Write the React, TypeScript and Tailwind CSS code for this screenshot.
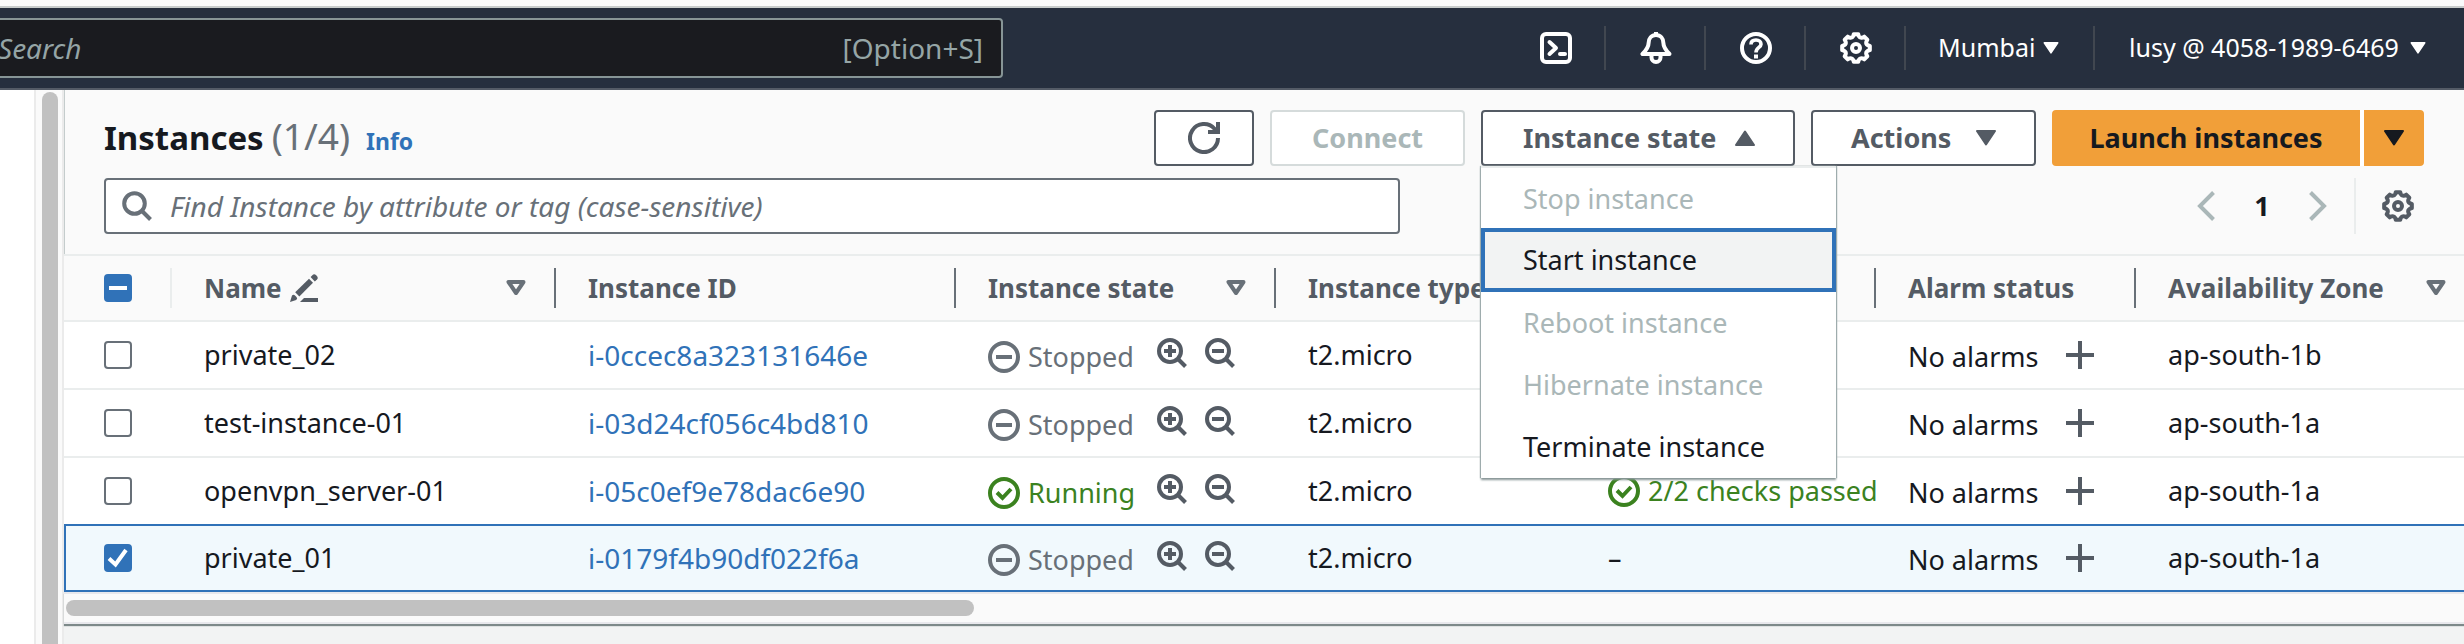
import { useState } from "react";
import type { ReactNode } from "react";

type IconProps = { className?: string };

function gearPath(): string {
  const teeth = 8;
  const pts: string[] = [];
  for (let i = 0; i < teeth; i++) {
    const at = (deg: number, r: number) => {
      const a = ((i * 45 + deg - 90) * Math.PI) / 180;
      return `${(16 + r * Math.cos(a)).toFixed(2)} ${(16 + r * Math.sin(a)).toFixed(2)}`;
    };
    pts.push(`${i === 0 ? "M" : "L"}${at(-9, 14)}`, `L${at(9, 14)}`, `L${at(13, 12.2)}`, `Q${at(22.5, 10.4)} ${at(32, 12.2)}`);
  }
  return pts.join("") + "Z";
}

const GEAR = gearPath();

function GearIcon({ className }: IconProps) {
  return (
    <svg viewBox="0 0 32 32" className={className} fill="none" stroke="currentColor" strokeWidth="4" strokeLinejoin="round" aria-hidden="true">
      <path d={GEAR} />
      <circle cx="16" cy="16" r="4" />
    </svg>
  );
}

function TerminalIcon({ className }: IconProps) {
  return (
    <svg viewBox="0 0 32 32" className={className} fill="none" stroke="currentColor" strokeWidth="4" aria-hidden="true">
      <rect x="2" y="2" width="28" height="28" rx="4" />
      <path d="M9.5 10l6.5 6-6.5 6M20 22h5" strokeLinecap="round" strokeLinejoin="round" />
    </svg>
  );
}

function BellIcon({ className }: IconProps) {
  return (
    <svg viewBox="0 0 32 32" className={className} fill="none" stroke="currentColor" strokeWidth="4" strokeLinejoin="round" aria-hidden="true">
      <path d="M16 3C11.5 3 8.600 6.500 8.600 11C8.600 15.500 6 18.500 2.500 22H29.500C26 18.500 23.400 15.500 23.400 11C23.400 6.500 20.500 3 16 3Z" />
      <path d="M16 0v3" />
      <path d="M11.500 23v2.500a4.500 4.500 0 0 0 9 0V23" />
    </svg>
  );
}

function HelpIcon({ className }: IconProps) {
  return (
    <svg viewBox="0 0 32 32" className={className} fill="none" stroke="currentColor" strokeWidth="4" aria-hidden="true">
      <circle cx="16" cy="16" r="14" />
      <path d="M11 12.500C11 9.500 13 8 16 8s5 1.600 5 4.200c0 3.300-5 3.300-5 8.300" strokeWidth="3.600" />
      <path d="M16 22.500v4" />
    </svg>
  );
}

function SearchIcon({ className }: IconProps) {
  return (
    <svg viewBox="0 0 30 30" className={className} fill="none" stroke="currentColor" strokeWidth="4" aria-hidden="true">
      <circle cx="12.500" cy="12.500" r="10.300" />
      <path d="M19.500 19.500l9 9" />
    </svg>
  );
}

function ZoomIcon({ className, plus }: IconProps & { plus?: boolean }) {
  return (
    <svg viewBox="0 0 30 30" className={className} fill="none" stroke="currentColor" strokeWidth="4" aria-hidden="true">
      <circle cx="13" cy="13" r="11" />
      <path d="M20.500 20.500l8 8" />
      <path d="M7 13h12" />
      {plus && <path d="M13 7v12" />}
    </svg>
  );
}

function RefreshIcon({ className }: IconProps) {
  return (
    <svg viewBox="0 0 32 32" className={className} fill="none" stroke="currentColor" strokeWidth="4" aria-hidden="true">
      <path d="M30 16A14 14 0 1 1 26.500 6.800L29 10" />
      <path d="M30 0V10H20" />
    </svg>
  );
}

function StoppedIcon({ className }: IconProps) {
  return (
    <svg viewBox="0 0 32 32" className={className} fill="none" stroke="currentColor" strokeWidth="4" aria-hidden="true">
      <circle cx="16" cy="16" r="14" />
      <path d="M8 16h16" />
    </svg>
  );
}

function OkIcon({ className }: IconProps) {
  return (
    <svg viewBox="0 0 32 32" className={className} fill="none" stroke="currentColor" strokeWidth="4" aria-hidden="true">
      <circle cx="16" cy="16" r="14" />
      <path d="M9 15.500l5.500 5.500 8.500-9" />
    </svg>
  );
}

function PencilIcon({ className }: IconProps) {
  return (
    <svg viewBox="0 0 28 28" className={className} fill="currentColor" aria-hidden="true">
      <path d="M0 28L2 21.500Q3.500 19.800 5 21.500L6.500 23Q8 24.500 6.200 26Z" />
      <path d="M5.200 18.300L19 4.800L23 8.800L9.300 22.500Z" />
      <path d="M20.600 3L22.600 1Q24.200 -0.600 26.400 1.500Q28.800 3.800 27 5.500L24.800 7.400Z" />
      <path d="M14 24H28V28H10Z" />
    </svg>
  );
}

function PlusIcon({ className }: IconProps) {
  return (
    <svg viewBox="0 0 28 28" className={className} fill="none" stroke="currentColor" strokeWidth="4" aria-hidden="true">
      <path d="M14 0v28M0 14h28" />
    </svg>
  );
}

function Caret({ className, up }: IconProps & { up?: boolean }) {
  return (
    <svg viewBox="0 0 20 16" className={className} fill="currentColor" stroke="currentColor" strokeWidth="2" strokeLinejoin="round" aria-hidden="true">
      <path d={up ? "M10 1.500L19 15H1Z" : "M1 1H19L10 14.500Z"} />
    </svg>
  );
}

function SortIcon({ className }: IconProps) {
  return (
    <svg viewBox="0 0 20 16" className={className} fill="none" stroke="currentColor" strokeWidth="4" strokeLinejoin="round" aria-hidden="true">
      <path d="M2.500 2H17.500L10 13Z" />
    </svg>
  );
}

function Chevron({ className, right }: IconProps & { right?: boolean }) {
  return (
    <svg viewBox="0 0 18 30" className={className} fill="none" stroke="currentColor" strokeWidth="4" aria-hidden="true">
      <path d={right ? "M1.500 1.500L15 15L1.500 28.500" : "M16.500 1.500L3 15L16.500 28.500"} />
    </svg>
  );
}

function Checkbox({ label, checked, mixed, onChange }: { label: string; checked: boolean; mixed?: boolean; onChange: () => void }) {
  return (
    <span className="grid size-7">
      <input
        type="checkbox"
        aria-label={label}
        checked={checked}
        onChange={onChange}
        className="col-start-1 row-start-1 size-7 appearance-none rounded-[4px] border-2 border-[#687078] bg-white checked:border-[#3072b8] checked:bg-[#3072b8]"
      />
      {checked && (
        <svg viewBox="0 0 28 28" className="pointer-events-none col-start-1 row-start-1 size-7" fill="none" stroke="white" strokeWidth="4" aria-hidden="true">
          <path d={mixed ? "M5 14h18" : "M5 14.500l6.500 6L22 6"} />
        </svg>
      )}
    </span>
  );
}

function NavSeparator() {
  return <span className="h-11 w-0.5 shrink-0 bg-[#414750]" />;
}

function NavIconButton({ label, children }: { label: string; children: ReactNode }) {
  return (
    <>
      <button type="button" aria-label={label} className="flex h-full w-[98px] shrink-0 items-center justify-center pl-0.5">
        {children}
      </button>
      <NavSeparator />
    </>
  );
}

function TopBar() {
  return (
    <header className="flex h-[84px] shrink-0 items-center justify-between border-t-2 border-b-2 border-t-[#c8cccc] border-b-[#545b66] bg-[#262f3e] text-[25px] text-white">
      <div className="-ml-5 flex h-[60px] w-[1023px] items-center rounded-[4px] border-2 border-[#879596] bg-[#1a1b1f] pr-[18px] pl-[16px] text-[28px] text-[#95a5a6]">
        <input type="search" aria-label="Search services" placeholder="Search" className="min-w-0 flex-1 bg-transparent outline-none placeholder:text-[#95a5a6] placeholder:italic" />
        <span>[Option+S]</span>
      </div>
      <nav className="flex h-full items-center">
        <NavIconButton label="CloudShell"><TerminalIcon className="size-8" /></NavIconButton>
        <NavIconButton label="Notifications"><BellIcon className="size-8" /></NavIconButton>
        <NavIconButton label="Help"><HelpIcon className="size-8" /></NavIconButton>
        <NavIconButton label="Settings"><GearIcon className="size-8" /></NavIconButton>
        <button type="button" className="flex h-full w-[187px] items-center justify-between pr-[34px] pl-8">
          Mumbai
          <Caret className="h-3 w-4 shrink-0" />
        </button>
        <NavSeparator />
        <button type="button" className="flex h-full w-[369px] items-center justify-between pr-[38px] pl-[34px]">
          lusy @ 4058-1989-6469
          <Caret className="h-3 w-4 shrink-0" />
        </button>
      </nav>
    </header>
  );
}

const MENU = [
  { label: "Stop instance", enabled: false },
  { label: "Start instance", enabled: true, focused: true },
  { label: "Reboot instance", enabled: false },
  { label: "Hibernate instance", enabled: false },
  { label: "Terminate instance", enabled: true },
];

function StateMenu() {
  return (
    <ul role="menu" className="absolute top-full left-0 z-10 w-[355px] border-t-2 border-[#eaeded] bg-white font-normal text-[#16191f] shadow-[0_2px_2px_0_#879596,1px_0_1px_0_#aab7b8,-1px_0_1px_0_#aab7b8]">
      {MENU.map((item) => (
        <li key={item.label} role="none">
          <button
            type="button"
            role="menuitem"
            disabled={!item.enabled}
            className={
              item.focused
                ? "-mt-0.5 flex h-16 w-full items-center border-4 border-[#3072b8] bg-[#f2f3f3] px-[38px] text-left"
                : "flex h-[62px] w-full items-center px-[42px] text-left disabled:text-[#aab7b8]"
            }
          >
            {item.label}
          </button>
        </li>
      ))}
    </ul>
  );
}

function Toolbar() {
  return (
    <div className="flex flex-col gap-3 border-l border-[#c4cccc] bg-[#fafafa] pt-5 pr-10 pb-5 pl-[39px]">
      <div className="flex h-14 items-center justify-between">
        <h1 className="flex items-baseline pb-1 text-[33px] font-bold text-[#16191f]">
          Instances
          <span className="ml-2 text-[37px] font-normal text-[#687078]">(1/4)</span>
          <a href="#info" className="ml-4 text-[23px] font-bold text-[#3072b8]">Info</a>
        </h1>
        <div className="flex gap-4 text-[27px] font-bold text-[#545b64]">
          <button type="button" aria-label="Refresh" className="flex h-14 w-[100px] items-center justify-center rounded-[4px] border-2 border-[#545b64] bg-white">
            <RefreshIcon className="size-8" />
          </button>
          <button type="button" disabled className="h-14 w-[195px] rounded-[4px] border-2 border-[#d5dbdb] bg-white text-[#aab7b8]">
            Connect
          </button>
          <div className="relative">
            <button type="button" aria-expanded="true" className="flex h-14 w-[314px] items-center justify-between rounded-[4px] border-2 border-[#545b64] bg-white pr-[38px] pl-10">
              Instance state
              <Caret up className="h-4 w-5" />
            </button>
            <StateMenu />
          </div>
          <button type="button" className="flex h-14 w-[225px] items-center justify-between rounded-[4px] border-2 border-[#545b64] bg-white pr-[38px] pl-[38px]">
            Actions
            <Caret className="h-4 w-5" />
          </button>
          <div className="flex gap-1 bg-white text-[#16191f]">
            <button type="button" className="h-14 w-[308px] rounded-l-[4px] bg-[#f19f39]">Launch instances</button>
            <button type="button" aria-label="More launch options" className="flex h-14 w-15 items-center justify-center rounded-r-[4px] bg-[#f19f39]">
              <Caret className="h-4 w-5" />
            </button>
          </div>
        </div>
      </div>
      <div className="flex items-center justify-between">
        <label className="flex h-14 w-[1296px] items-center rounded-[4px] border-2 border-[#687078] bg-white pl-4 text-[#687078]">
          <SearchIcon className="size-[30px] shrink-0" />
          <input
            type="search"
            aria-label="Find Instance by attribute or tag (case-sensitive)"
            placeholder="Find Instance by attribute or tag (case-sensitive)"
            className="ml-[18px] min-w-0 flex-1 bg-transparent text-[28px] outline-none placeholder:text-[#687078] placeholder:italic"
          />
        </label>
        <div className="flex items-center">
          <button type="button" aria-label="Previous page" className="text-[#aab7b8]"><Chevron className="h-[30px] w-[18px]" /></button>
          <span className="w-[94px] text-center text-[27px] font-bold text-[#16191f]">1</span>
          <button type="button" aria-label="Next page" className="text-[#aab7b8]"><Chevron right className="h-[30px] w-[18px]" /></button>
          <span className="mr-[26px] ml-[27px] h-14 w-0.5 bg-[#eaeded]" />
          <button type="button" aria-label="Preferences" className="mr-[10px] text-[#545b64]"><GearIcon className="size-8" /></button>
        </div>
      </div>
    </div>
  );
}

type Instance = { name: string; id: string; type: string; running: boolean; check: string; zone: string };

const INSTANCES: Instance[] = [
  { name: "private_02", id: "i-0ccec8a323131646e", type: "t2.micro", running: false, check: "", zone: "ap-south-1b" },
  { name: "test-instance-01", id: "i-03d24cf056c4bd810", type: "t2.micro", running: false, check: "", zone: "ap-south-1a" },
  { name: "openvpn_server-01", id: "i-05c0ef9e78dac6e90", type: "t2.micro", running: true, check: "2/2 checks passed", zone: "ap-south-1a" },
  { name: "private_01", id: "i-0179f4b90df022f6a", type: "t2.micro", running: false, check: "–", zone: "ap-south-1a" },
];

function HeadCell({ children, sortable, last }: { children?: ReactNode; sortable?: boolean; last?: boolean }) {
  return (
    <th scope="col" className="h-[66px] border-b-2 border-[#eaeded] p-0 text-left font-bold">
      <div className={last ? "flex h-10 items-center justify-between pr-[18px] pl-8" : "flex h-10 items-center justify-between border-r-2 border-[#687078] pr-7 pl-8"}>
        <span className="flex items-center gap-2 whitespace-nowrap">{children}</span>
        {sortable && <SortIcon className="h-4 w-5 shrink-0 text-[#687078]" />}
      </div>
    </th>
  );
}

function InstanceTable() {
  const [selected, setSelected] = useState<string[]>(["private_01"]);
  const toggle = (name: string) =>
    setSelected((cur) => (cur.includes(name) ? cur.filter((n) => n !== name) : [...cur, name]));

  return (
    <table className="w-full table-fixed border-separate border-spacing-0 border-t-2 border-[#eaeded] text-[27px] text-[#16191f]">
      <colgroup>
        <col className="w-[108px]" />
        <col className="w-[384px]" />
        <col className="w-[400px]" />
        <col className="w-[320px]" />
        <col className="w-[300px]" />
        <col className="w-[300px]" />
        <col className="w-[260px]" />
        <col />
      </colgroup>
      <thead className="bg-[#fafafa] text-[26px] text-[#545b64]">
        <tr>
          <th scope="col" className="h-[66px] border-b-2 border-[#eaeded] p-0">
            <div className="flex h-10 items-center border-r-2 border-[#eaeded] pl-10">
              <Checkbox label="Select all instances" checked={selected.length > 0} mixed={selected.length < INSTANCES.length} onChange={() => setSelected([])} />
            </div>
          </th>
          <HeadCell sortable>
            Name
            <PencilIcon className="size-7" />
          </HeadCell>
          <HeadCell>Instance ID</HeadCell>
          <HeadCell sortable>Instance state</HeadCell>
          <HeadCell>Instance type</HeadCell>
          <HeadCell />
          <HeadCell>Alarm status</HeadCell>
          <HeadCell sortable last>Availability Zone</HeadCell>
        </tr>
      </thead>
      <tbody>
        {INSTANCES.map((row, i) => {
          const on = selected.includes(row.name);
          const beforeSelected = i + 1 < INSTANCES.length && selected.includes(INSTANCES[i + 1].name);
          const rowClass = on
            ? "bg-[#f1f9fd] [&>td]:h-[68px] [&>td]:border-y-2 [&>td]:border-[#3072b8] [&>td:first-child]:border-l-2 [&>td:first-child]:pl-[38px]"
            : beforeSelected
              ? "bg-white [&>td]:h-[66px] [&>td:first-child]:pl-10"
              : "bg-white [&>td]:h-[68px] [&>td]:border-b-2 [&>td]:border-[#eaeded] [&>td:first-child]:pl-10";
          return (
            <tr key={row.id} className={rowClass}>
              <td className="p-0">
                <Checkbox label={`Select ${row.name}`} checked={on} onChange={() => toggle(row.name)} />
              </td>
              <td className="py-0 pr-0 pl-8">{row.name}</td>
              <td className="py-0 pr-0 pl-8">
                <a href={`#${row.id}`} className="text-[28px] text-[#3072b8]">{row.id}</a>
              </td>
              <td className="py-0 pr-0 pl-8">
                <div className="flex items-center">
                  <span className={row.running ? "flex w-[169px] items-center gap-2 pt-1 text-[#3b821f]" : "flex w-[169px] items-center gap-2 pt-1 text-[#687078]"}>
                    {row.running ? <OkIcon className="size-8 shrink-0" /> : <StoppedIcon className="size-8 shrink-0" />}
                    {row.running ? "Running" : "Stopped"}
                  </span>
                  <span className="flex gap-[18px] pb-1 text-[#545b64]">
                    <button type="button" aria-label="Filter by this state"><ZoomIcon plus className="size-[30px]" /></button>
                    <button type="button" aria-label="Exclude this state"><ZoomIcon className="size-[30px]" /></button>
                  </span>
                </div>
              </td>
              <td className="py-0 pr-0 pl-8">{row.type}</td>
              <td className="overflow-hidden py-0 pr-0 pl-8 whitespace-nowrap">
                {row.running ? (
                  <span className="flex items-center gap-2 text-[#3b821f]">
                    <OkIcon className="size-8 shrink-0" />
                    {row.check}
                  </span>
                ) : (
                  row.check
                )}
              </td>
              <td className="py-0 pr-0 pl-8">
                <div className="flex items-center justify-between pr-[42px]">
                  <span className="pt-1">No alarms</span>
                  <button type="button" aria-label="Add alarm" className="text-[#545b64]"><PlusIcon className="size-7" /></button>
                </div>
              </td>
              <td className="py-0 pr-0 pl-8">{row.zone}</td>
            </tr>
          );
        })}
      </tbody>
    </table>
  );
}

export default function App() {
  return (
    <div className="flex min-h-screen flex-col overflow-hidden bg-[#fafafb] pt-1.5 font-['Noto_Sans','Open_Sans',sans-serif]">
      <TopBar />
      <div className="flex flex-1">
        <aside className="flex shrink-0 bg-white">
          <div className="w-[34px]" />
          <div className="flex w-[30px] border-x-2 border-[#ebebeb] bg-[#fafafa] pt-0.5 pl-1.5">
            <div className="w-4 rounded-t-full bg-[#c1c1c1]" />
          </div>
        </aside>
        <main className="flex min-w-0 flex-1 flex-col bg-[#f2f3f3]">
          <section>
            <Toolbar />
            <InstanceTable />
            <div className="h-8 border-y-2 border-[#e8e8ec] bg-[#fafafa] pt-1.5 pl-0.5 shadow-[0_2px_1px_0_#7d8989]">
              <div className="h-4 w-[908px] rounded-full bg-[#c1c1c1]" />
            </div>
          </section>
          <div className="min-h-5 flex-1" />
        </main>
      </div>
    </div>
  );
}
